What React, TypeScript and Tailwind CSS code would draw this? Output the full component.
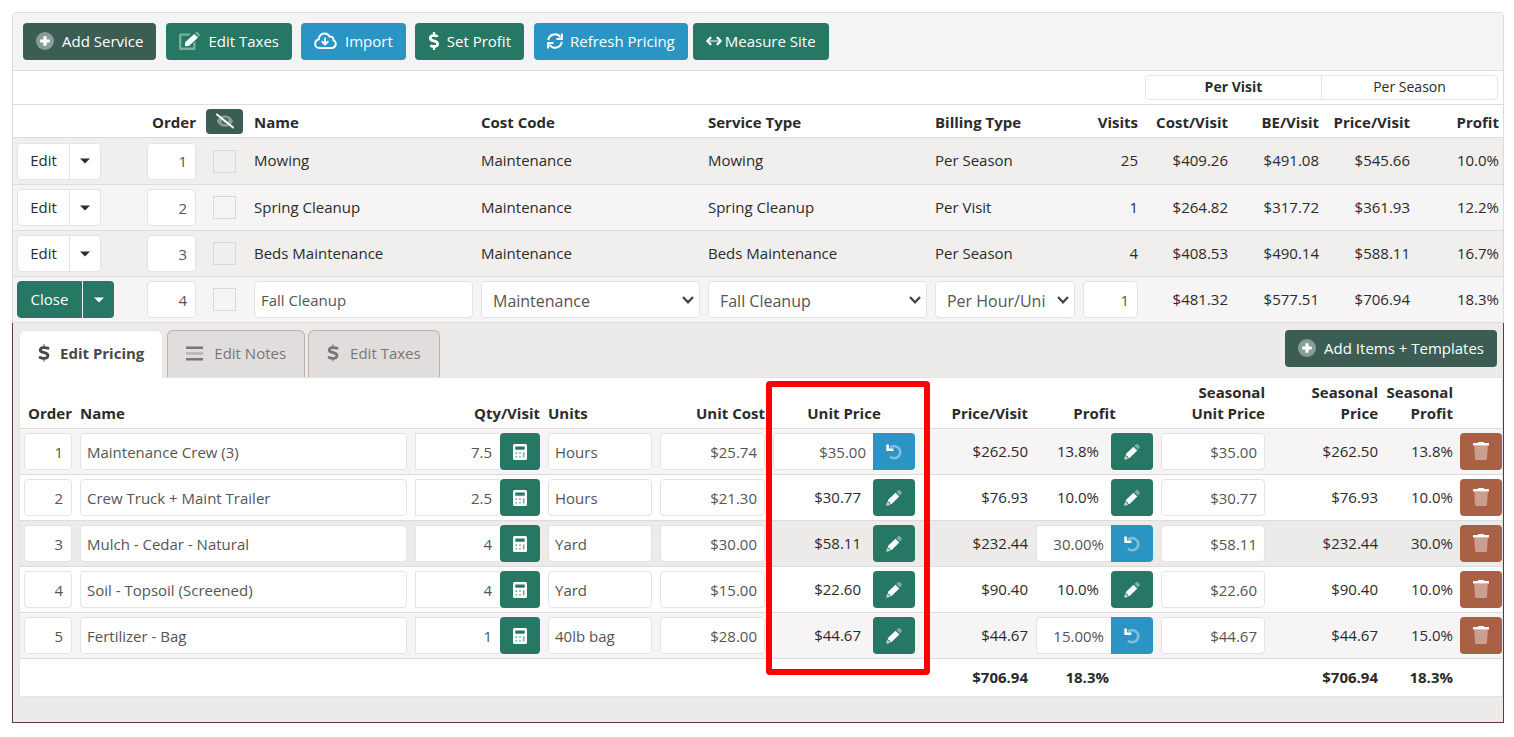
import type { ReactNode } from 'react';
import { clsx } from 'clsx';
import { FaDollarSign } from 'react-icons/fa';

interface Service {
  order: number;
  name: string;
  costCode: string;
  serviceType: string;
  billing: string;
  visits: number;
  cost: string;
  breakEven: string;
  price: string;
  profit: string;
  open?: boolean;
}

interface Item {
  order: number;
  name: string;
  qty: string;
  units: string;
  unitCost: string;
  unitPrice: string;
  price: string;
  profit: string;
  seasonalProfit: string;
  priceOverride?: boolean;
  profitOverride?: boolean;
  row: string;
}

const services: Service[] = [
  { order: 1, name: 'Mowing', costCode: 'Maintenance', serviceType: 'Mowing', billing: 'Per Season', visits: 25, cost: '$409.26', breakEven: '$491.08', price: '$545.66', profit: '10.0%' },
  { order: 2, name: 'Spring Cleanup', costCode: 'Maintenance', serviceType: 'Spring Cleanup', billing: 'Per Visit', visits: 1, cost: '$264.82', breakEven: '$317.72', price: '$361.93', profit: '12.2%' },
  { order: 3, name: 'Beds Maintenance', costCode: 'Maintenance', serviceType: 'Beds Maintenance', billing: 'Per Season', visits: 4, cost: '$408.53', breakEven: '$490.14', price: '$588.11', profit: '16.7%' },
  { order: 4, name: 'Fall Cleanup', costCode: 'Maintenance', serviceType: 'Fall Cleanup', billing: 'Per Hour/Unit', visits: 1, cost: '$481.32', breakEven: '$577.51', price: '$706.94', profit: '18.3%', open: true },
];

const items: Item[] = [
  { order: 1, name: 'Maintenance Crew (3)', qty: '7.5', units: 'Hours', unitCost: '$25.74', unitPrice: '$35.00', price: '$262.50', profit: '13.8%', seasonalProfit: '13.8%', priceOverride: true, row: 'bg-[#f6f4f5]' },
  { order: 2, name: 'Crew Truck + Maint Trailer', qty: '2.5', units: 'Hours', unitCost: '$21.30', unitPrice: '$30.77', price: '$76.93', profit: '10.0%', seasonalProfit: '10.0%', row: 'bg-white' },
  { order: 3, name: 'Mulch - Cedar - Natural', qty: '4', units: 'Yard', unitCost: '$30.00', unitPrice: '$58.11', price: '$232.44', profit: '30.00%', seasonalProfit: '30.0%', profitOverride: true, row: 'bg-[#ecebe9]' },
  { order: 4, name: 'Soil - Topsoil (Screened)', qty: '4', units: 'Yard', unitCost: '$15.00', unitPrice: '$22.60', price: '$90.40', profit: '10.0%', seasonalProfit: '10.0%', row: 'bg-white' },
  { order: 5, name: 'Fertilizer - Bag', qty: '1', units: '40lb bag', unitCost: '$28.00', unitPrice: '$44.67', price: '$44.67', profit: '15.00%', seasonalProfit: '15.0%', profitOverride: true, row: 'bg-[#f6f4f5]' },
];

const field = 'block h-[37px] w-full min-w-0 rounded border border-[#e4e4e4] bg-white text-[#555] outline-none';
const cell = 'h-[46px] border-b border-[#dcdcdc] px-1';
const textCell = 'h-[46px] border-b border-[#dcdcdc] px-1 pb-0.5';

/* Icons */

const PlusCircle = () => (
  <svg viewBox="0 0 18 18" className="size-[18px]" fill="currentColor" aria-hidden="true">
    <circle cx="9" cy="9" r="9" opacity="0.4" />
    <path d="M7.4 4.2h3.2v3.2h3.2v3.2h-3.2v3.2H7.4v-3.2H4.2V7.4h3.2z" />
  </svg>
);

const EditIcon = () => (
  <svg viewBox="0 0 21 18" className="h-[18px] w-[21px]" fill="currentColor" aria-hidden="true">
    <path opacity="0.4" d="M1.7 1.4H12l-2.2 2.3H2.4v11.9h11.8v-4.3l2.3-2.3v7.4c0 .9-.7 1.6-1.6 1.6H1.7C.8 18 .1 17.3.1 16.4V3C.1 2.1.8 1.4 1.7 1.4z" />
    <path opacity="0.4" d="M16.2 1 17 .3c.6-.5 1.300-.4 1.800 0l1.900 1.900c.4.5.4 1.200 0 1.700l-.9.9z" />
    <path d="m15.300 1.900 3.700 3.700-8.800 8.200-3.700.5c-.4 0-.7-.3-.6-.7l.4-3.500z" />
  </svg>
);

const CloudDownload = () => (
  <svg viewBox="0 0 24 18" className="h-[18px] w-[23px]" fill="none" stroke="currentColor" strokeWidth="2" strokeLinecap="round" strokeLinejoin="round" aria-hidden="true">
    <path d="M5.5 16.300h13a4.300 4.300 0 0 0 1.700-8.200c.4-2.600-1.600-4-3.700-3.600C15.300 2.300 13.300 1.200 11 1.200c-3.700 0-6 2.800-5.900 6C2.700 7.900 1.200 9.800 1.200 12c0 2.400 1.900 4.300 4.300 4.300z" />
    <path d="M11.5 6.300v6M8.500 9.700l3 3 3-3" />
  </svg>
);

const RefreshIcon = () => (
  <svg viewBox="0 0 16 16" className="size-4" fill="none" stroke="currentColor" strokeWidth="2" aria-hidden="true">
    <path d="M1.2 7.2A6.800 6.800 0 0 1 13.500 4.300M14.800 8.800A6.800 6.800 0 0 1 2.500 11.700" />
    <path d="M14.900.5v5.400H9.500M1.100 15.500v-5.400h5.400" />
  </svg>
);

const ArrowsH = () => (
  <svg viewBox="0 0 16 10" className="h-2.5 w-4" fill="none" stroke="currentColor" strokeWidth="2.2" strokeLinecap="round" strokeLinejoin="round" aria-hidden="true">
    <path opacity="0.5" strokeLinecap="butt" d="M3 5h10" />
    <path d="M4.500 1.700 1.300 5l3.200 3.300M11.500 1.700 14.700 5l-3.200 3.300" />
  </svg>
);

const EyeSlash = () => (
  <svg viewBox="0 0 20 16" className="h-4 w-5" aria-hidden="true">
    <path fill="currentColor" opacity="0.4" fillRule="evenodd" d="M10 2.200c3.800 0 6.600 2.300 8.200 5.800-1.600 3.500-4.400 5.800-8.200 5.800S3.400 11.500 1.800 8C3.400 4.500 6.200 2.200 10 2.200zm0 2.600a3.200 3.200 0 1 0 0 6.400 3.200 3.200 0 0 0 0-6.400zm0 1.400a1.800 1.800 0 1 1 0 3.600 1.800 1.800 0 0 1 0-3.600z" />
    <path stroke="currentColor" strokeWidth="2" strokeLinecap="round" d="m2 1.500 16 13" />
  </svg>
);

const DollarDuo = () => (
  <svg viewBox="0 0 12 18" className="h-[18px] w-3" fill="none" stroke="currentColor" aria-hidden="true">
    <path opacity="0.5" strokeWidth="2.2" strokeLinecap="round" d="M6 1.200v2.300M6 14.500v2.300" />
    <path strokeWidth="2.800" strokeLinecap="round" d="M10 4.200C8.500 3.700 7 3.500 5.300 3.600 1.500 3.800 1.300 7.300 4.500 8.200l3.200.9c3.400 1.100 2.600 5-.8 5.200-1.800.1-3.400-.1-4.900-.9" />
  </svg>
);

const BarsIcon = () => (
  <svg viewBox="0 0 17 15" className="h-[15px] w-[17px]" fill="currentColor" aria-hidden="true">
    <path d="M0 .5h17v2.500H0zM0 12h17v2.500H0z" />
    <path opacity="0.4" d="M0 6.200h17v2.500H0z" />
  </svg>
);

const CalculatorIcon = () => (
  <svg viewBox="0 0 14 16" className="h-4 w-3.5" aria-hidden="true">
    <rect width="14" height="16" rx="1.500" fill="white" />
    <path fill="#267763" d="M2.300 2.500h9.400v3.200H2.300z" />
    <path fill="#267763" opacity="0.6" d="M2.500 8.300h1.600v1.600H2.500zM6.200 8.300h1.600v1.600H6.200zM9.900 8.300h1.600v5.300H9.900zM2.500 12h1.600v1.600H2.500zM6.200 12h1.600v1.600H6.200z" />
  </svg>
);

const UndoIcon = () => (
  <svg viewBox="0 0 16 16" className="size-4" fill="none" stroke="currentColor" aria-hidden="true">
    <path opacity="0.4" strokeWidth="2.600" d="M4.200 3.600A6.100 6.100 0 1 1 4 12.600" />
    <path strokeWidth="2.600" d="M1.600.6v5.200h5.800" />
  </svg>
);

const PencilIcon = () => (
  <svg viewBox="0 0 16 16" className="size-4" fill="currentColor" aria-hidden="true">
    <path opacity="0.4" d="m10.300 2 1.600-1.500c.7-.7 1.600-.7 2.300 0l1.200 1.200c.7.7.7 1.600 0 2.300l-1.600 1.500z" />
    <path d="m9.400 2.800 3.900 3.800-7.700 7.300-1.400-.1-.4-1.600-1.700-.5-.2-1.600z" />
    <path opacity="0.7" d="m1.400 11 .3 1.300 1.500.6.5 1.400 1.300.3-4 1.200c-.6.1-.9-.2-.8-.8z" />
  </svg>
);

const TrashIcon = () => (
  <svg viewBox="0 0 16 18" className="h-[18px] w-4" fill="currentColor" aria-hidden="true">
    <path d="M5.500 0h5l.7 1H16v2.500H0V1h4.800z" />
    <path opacity="0.4" d="M1.200 3.500h13.600L14 16.600c0 .8-.6 1.400-1.400 1.400H3.400c-.8 0-1.400-.6-1.400-1.400z" />
  </svg>
);

const Caret = () => (
  <svg viewBox="0 0 10 6" className="h-1.5 w-2.5" fill="currentColor" aria-hidden="true">
    <path d="M0 .5h10L5 5.500z" />
  </svg>
);

/* Controls */

interface ToolButtonProps {
  icon: ReactNode;
  label: string;
  className: string;
}

function ToolButton({ icon, label, className }: ToolButtonProps) {
  return (
    <button type="button" className={clsx('flex h-[37px] items-center rounded pb-0.5 text-white whitespace-nowrap', className)}>
      {icon}
      {label}
    </button>
  );
}

function SplitButton({ open }: { open?: boolean }) {
  return (
    <div className="flex">
      <button
        type="button"
        className={clsx('h-[37px] rounded-l border pb-0.5', open ? 'w-[65px] border-[#267763] bg-[#267763] text-white' : 'w-[53px] border-[#e4e4e4] bg-white')}
      >
        {open ? 'Close' : 'Edit'}
      </button>
      <button
        type="button"
        aria-label="More actions"
        className={clsx(
          'flex h-[37px] w-[31px] items-center justify-center rounded-r',
          open ? 'ml-px bg-[#267763] text-white' : 'border border-l-0 border-[#e4e4e4] bg-white'
        )}
      >
        <Caret />
      </button>
    </div>
  );
}

function SelectField({ label, value }: { label: string; value: string }) {
  return (
    <div className="relative">
      <select aria-label={label} className={clsx(field, 'appearance-none pt-0.5 pr-[29px] pl-[11px] text-base')}>
        <option>{value}</option>
      </select>
      <svg viewBox="0 0 12 8" className="pointer-events-none absolute top-[15px] right-1.5 h-2 w-3 text-[#444]" fill="none" stroke="currentColor" strokeWidth="2.2" aria-hidden="true">
        <path d="m1 1 5 5.300L11 1" />
      </svg>
    </div>
  );
}

interface OverrideProps {
  label: string;
  value: string;
  active?: boolean;
}

// Shows the calculated value until it is overridden, then an editable one
function Override({ label, value, active }: OverrideProps) {
  if (active) {
    return (
      <div className="flex">
        <input aria-label={label} defaultValue={value} className="h-[37px] w-full min-w-0 rounded-l border border-r-0 border-[#e4e4e4] bg-white pr-[7px] text-right text-[#555] outline-none" />
        <button type="button" aria-label={`Reset ${label}`} className="flex h-[37px] w-[42px] shrink-0 items-center justify-center rounded-r bg-[#2a95c5] text-white">
          <UndoIcon />
        </button>
      </div>
    );
  }
  return (
    <div className="flex items-center justify-end gap-3">
      <span className="pb-px">{value}</span>
      <button type="button" aria-label={`Edit ${label}`} className="flex h-[37px] w-[42px] shrink-0 items-center justify-center rounded bg-[#267763] text-white">
        <PencilIcon />
      </button>
    </div>
  );
}

function ServiceTable() {
  const head = 'h-[33px] border-b border-[#dcdcdc] px-1 pt-0.5 font-bold';
  return (
    <table className="w-full table-fixed border-separate border-spacing-0">
      <colgroup>
        <col className="w-[130px]" />
        <col className="w-[57px]" />
        <col className="w-[50px]" />
        <col />
        <col />
        <col />
        <col className="w-[148px]" />
        <col className="w-[63px]" />
        <col className="w-[90px]" />
        <col className="w-[91px]" />
        <col className="w-[91px]" />
        <col className="w-[89px]" />
      </colgroup>
      <thead>
        <tr>
          <td colSpan={8} className="h-[34px] border-b border-[#dcdcdc]" />
          <td colSpan={4} className="h-[34px] border-b border-[#dcdcdc] pr-[5px] pl-[3px]">
            <div className="flex h-[25px] rounded border border-[#e4e4e4] text-sm">
              <button type="button" className="flex-1 border-r border-[#e4e4e4] pb-0.5 font-bold">Per Visit</button>
              <button type="button" className="flex-1 pb-0.5">Per Season</button>
            </div>
          </td>
        </tr>
        <tr className="text-left whitespace-nowrap">
          <td className={head} />
          <th className={clsx(head, 'text-right')}>Order</th>
          <td className="h-[33px] border-b border-[#dcdcdc] pl-1.5">
            <button type="button" aria-label="Show hidden services" className="flex h-[25px] w-[37px] items-center justify-center rounded bg-[#3b5d54] text-white">
              <EyeSlash />
            </button>
          </td>
          <th className={head}>Name</th>
          <th className={head}>Cost Code</th>
          <th className={head}>Service Type</th>
          <th className={head}>Billing Type</th>
          <th className={clsx(head, 'text-right')}>Visits</th>
          <th className={clsx(head, 'text-right')}>Cost/Visit</th>
          <th className={clsx(head, 'text-right')}>BE/Visit</th>
          <th className={clsx(head, 'text-right')}>Price/Visit</th>
          <th className={clsx(head, 'text-right')}>Profit</th>
        </tr>
      </thead>
      <tbody>
        {services.map((s) => (
          <tr key={s.order} className="first:h-[47px] odd:bg-[#f0efed] even:bg-[#f6f4f5]">
            <td className={cell}><SplitButton open={s.open} /></td>
            <td className={cell}>
              <input aria-label="Order" defaultValue={s.order} className={clsx(field, 'pr-2 text-right')} />
            </td>
            <td className="h-[46px] border-b border-[#dcdcdc] pl-[13px]">
              <input type="checkbox" aria-label={`Hide ${s.name}`} className="block size-[23px] appearance-none border border-[#d9d9d9]" />
            </td>
            {s.open ? (
              <>
                <td className={cell}><input aria-label="Name" defaultValue={s.name} className={clsx(field, 'px-1.5')} /></td>
                <td className={cell}><SelectField label="Cost Code" value={s.costCode} /></td>
                <td className={cell}><SelectField label="Service Type" value={s.serviceType} /></td>
                <td className={cell}><SelectField label="Billing Type" value={s.billing} /></td>
                <td className={cell}><input aria-label="Visits" defaultValue={s.visits} className={clsx(field, 'pr-2 text-right')} /></td>
              </>
            ) : (
              <>
                <td className={textCell}>{s.name}</td>
                <td className={textCell}>{s.costCode}</td>
                <td className={textCell}>{s.serviceType}</td>
                <td className={textCell}>{s.billing}</td>
                <td className={clsx(textCell, 'text-right')}>{s.visits}</td>
              </>
            )}
            <td className={clsx(textCell, 'text-right')}>{s.cost}</td>
            <td className={clsx(textCell, 'text-right')}>{s.breakEven}</td>
            <td className={clsx(textCell, 'text-right')}>{s.price}</td>
            <td className={clsx(textCell, 'text-right')}>{s.profit}</td>
          </tr>
        ))}
      </tbody>
    </table>
  );
}

function ItemTable() {
  const head = 'h-[51px] border-b border-[#dcdcdc] px-1 pb-1 align-bottom font-bold';
  return (
    <table className="w-full table-fixed border-separate border-spacing-0 bg-white leading-[21px]">
      <colgroup>
        <col className="w-[56px]" />
        <col />
        <col className="w-[133px]" />
        <col className="w-[112px]" />
        <col className="w-[113px]" />
        <col className="w-[150px]" />
        <col className="w-[113px]" />
        <col className="w-[125px]" />
        <col className="w-[112px]" />
        <col className="w-[113px]" />
        <col className="w-[75px]" />
        <col className="w-[45px]" />
      </colgroup>
      <thead>
        <tr className="text-right whitespace-nowrap">
          <th className={head}>Order</th>
          <th className={clsx(head, 'text-left')}>Name</th>
          <th className={head}>Qty/Visit</th>
          <th className={clsx(head, 'text-left')}>Units</th>
          <th className={head}>Unit Cost</th>
          <th className={clsx(head, 'relative text-center')}>
            Unit Price
            {/* Callout around the whole column */}
            <div className="pointer-events-none absolute top-[3px] -right-[11px] -left-[3px] z-10 h-[294px] rounded border-6 border-[#fe0000]" />
          </th>
          <th className={head}>Price/Visit</th>
          <th className={clsx(head, 'text-center')}>Profit</th>
          <th className={head}>Seasonal<br />Unit Price</th>
          <th className={head}>Seasonal<br />Price</th>
          <th className={head}>Seasonal<br />Profit</th>
          <td className={head} />
        </tr>
      </thead>
      <tbody>
        {items.map((item) => (
          <tr key={item.order} className={item.row}>
            <td className={cell}><input aria-label="Order" defaultValue={item.order} className={clsx(field, 'pr-2 text-right')} /></td>
            <td className={cell}><input aria-label="Name" defaultValue={item.name} className={clsx(field, 'px-1.5')} /></td>
            <td className={cell}>
              <div className="flex">
                <input aria-label="Quantity per visit" defaultValue={item.qty} className="h-[37px] w-full min-w-0 border border-r-0 border-[#e4e4e4] bg-white pr-2 text-right text-[#555] outline-none" />
                <button type="button" aria-label="Calculate quantity" className="flex h-[37px] w-10 shrink-0 items-center justify-center rounded bg-[#267763]">
                  <CalculatorIcon />
                </button>
              </div>
            </td>
            <td className={cell}><input aria-label="Units" defaultValue={item.units} className={clsx(field, 'px-1.5')} /></td>
            <td className={cell}><input aria-label="Unit cost" defaultValue={item.unitCost} className={clsx(field, 'pr-[7px] text-right')} /></td>
            <td className={cell}><Override label="unit price" value={item.unitPrice} active={item.priceOverride} /></td>
            <td className={clsx(cell, 'text-right')}>{item.price}</td>
            <td className={cell}><Override label="profit" value={item.profit} active={item.profitOverride} /></td>
            <td className={cell}><input aria-label="Seasonal unit price" defaultValue={item.unitPrice} className={clsx(field, 'pr-[7px] text-right')} /></td>
            <td className={clsx(cell, 'text-right')}>{item.price}</td>
            <td className={clsx(cell, 'text-right')}>{item.seasonalProfit}</td>
            <td className="h-[46px] border-b border-[#dcdcdc]">
              <button type="button" aria-label={`Delete ${item.name}`} className="ml-auto flex h-[37px] w-[42px] items-center justify-center rounded bg-[#a96045] pb-0.5 text-white">
                <TrashIcon />
              </button>
            </td>
          </tr>
        ))}
      </tbody>
      <tfoot>
        <tr className="text-right font-bold">
          <td colSpan={7} className="h-[37px] px-1">$706.94</td>
          <td className="px-1"><div className="pr-11">18.3%</div></td>
          <td />
          <td className="px-1">$706.94</td>
          <td className="px-1">18.3%</td>
          <td />
        </tr>
      </tfoot>
    </table>
  );
}

export default function App() {
  const idleTab = 'flex h-[47px] items-center rounded-t-md border border-b-0 border-[#bfb0aa] bg-[#e1dddc] pb-0.5 text-[#777]';
  return (
    <main className="min-w-[1240px] pt-3 pr-2.5 pb-3.5 pl-3 font-['Open_Sans',sans-serif] text-[15px] leading-[22px] text-[#2b2b2b]">
      <section className="rounded-t border border-b-0 border-[#dcdcdc]">
        <div className="flex border-b border-[#dcdcdc] bg-[#f4f4f4] p-2.5">
          <ToolButton icon={<PlusCircle />} label="Add Service" className="mr-2.5 gap-2 bg-[#3b5d54] px-[13px]" />
          <ToolButton icon={<EditIcon />} label="Edit Taxes" className="mr-[9px] gap-2 bg-[#267763] px-[13px]" />
          <ToolButton icon={<CloudDownload />} label="Import" className="mr-[9px] gap-2 bg-[#2a95c5] px-[13px]" />
          <ToolButton icon={<FaDollarSign className="h-[18px] w-3" />} label="Set Profit" className="mr-2.5 gap-[7px] bg-[#267763] px-[13px]" />
          <ToolButton icon={<RefreshIcon />} label="Refresh Pricing" className="mr-[5px] gap-[7px] bg-[#2a95c5] px-[13px]" />
          <ToolButton icon={<ArrowsH />} label="Measure Site" className="gap-[3px] bg-[#267763] px-[13px]" />
        </div>
        <ServiceTable />
      </section>

      <section className="border border-t-0 border-[#5a3d36] bg-[#ecebe9] pb-[25px] pl-1.5">
        <div className="flex h-[54px] items-end">
          <button type="button" className="relative -mb-px flex h-12 items-center gap-2.5 rounded-t-md border border-b-0 border-[#e4e4e4] bg-white px-[18px] pb-[3px] font-bold text-[#4a4a4a]">
            <DollarDuo />
            Edit Pricing
          </button>
          <button type="button" className={clsx(idleTab, 'ml-1 gap-[11px] px-[18px]')}>
            <BarsIcon />
            Edit Notes
          </button>
          <button type="button" className={clsx(idleTab, 'ml-[3px] gap-[11px] px-[18px]')}>
            <DollarDuo />
            Edit Taxes
          </button>
          <ToolButton icon={<PlusCircle />} label="Add Items + Templates" className="mr-1.5 mb-2.5 ml-auto gap-2 bg-[#3b5d54] px-[13px]" />
        </div>
        <div className="border border-[#e4e4e4]">
          <ItemTable />
        </div>
      </section>
    </main>
  );
}
